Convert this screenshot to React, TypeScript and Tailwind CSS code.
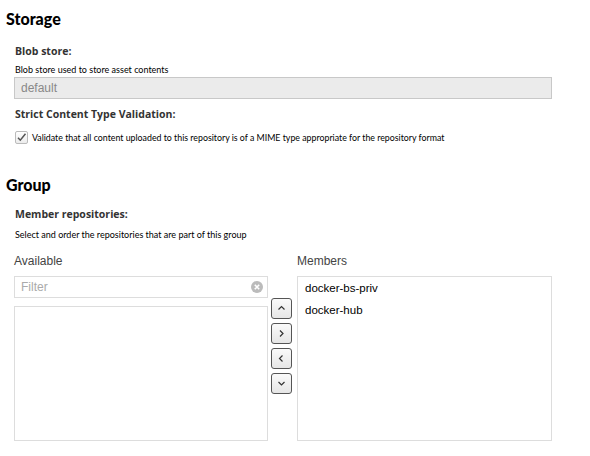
import React from 'react';

const Chevron: React.FC<{ dir: 'up' | 'down' | 'left' | 'right' }> = ({ dir }) => {
  const d = {
    up: 'M1.5 5.5 L4.5 2.5 L7.5 5.5',
    down: 'M1.5 3 L4.5 6 L7.5 3',
    left: 'M5.5 1.5 L2.5 4.5 L5.5 7.5',
    right: 'M3 1.5 L6 4.5 L3 7.5',
  }[dir];
  return (
    <svg width="9" height="9" viewBox="0 0 9 9" fill="none">
      <path d={d} stroke="#333" strokeWidth="1.2" />
    </svg>
  );
};

const MoveButton: React.FC<{ dir: 'up' | 'down' | 'left' | 'right' }> = ({ dir }) => (
  <button className="flex items-center justify-center w-[21px] h-[21px] rounded-[3px] border border-[#555] bg-gradient-to-b from-[#fafafa] to-[#e6e6e6]">
    <Chevron dir={dir} />
  </button>
);

export default function App() {
  return (
    <div className="w-[590px] h-[456px] bg-white text-black font-['Open_Sans',sans-serif] overflow-hidden">
      <h2 className="pl-[6px] pt-[9px] text-[16px] leading-[20px] font-black font-['Lato',sans-serif]">Storage</h2>

      <section className="pl-[15px]">
        <div className="mt-[15px] text-[10.5px] leading-[14px] font-bold text-[#333]">Blob store:</div>
        <div className="mt-[6px] text-[9px] leading-[12px] font-['Lato',sans-serif]">Blob store used to store asset contents</div>
        <div className="mt-px ml-[-1px] w-[538px] h-[22px] flex items-center px-[6px] bg-[#ebebeb] border border-[#c8c8c8] font-['Liberation_Sans',sans-serif] text-[12px] text-[#888]">
          default
        </div>

        <div className="mt-[8px] text-[10.5px] leading-[14px] font-bold text-[#333]">Strict Content Type Validation:</div>
        <label className="mt-[10px] flex items-center gap-[4px] h-[13px]">
          <span className="w-[13px] h-[13px] rounded-[2px] border border-[#bbb] bg-gradient-to-b from-white to-[#ececec] flex items-center justify-center">
            <svg width="11" height="11" viewBox="0 0 11 11" fill="none">
              <path d="M2 5.8 L4.3 8.2 L9.5 1.8" stroke="#555" strokeWidth="1.5" />
            </svg>
          </span>
          <span className="text-[8.8px] leading-[12px] font-['Lato',sans-serif]">
            Validate that all content uploaded to this repository is of a MIME type appropriate for the repository format
          </span>
        </label>
      </section>

      <h2 className="pl-[6px] mt-[31px] text-[16px] leading-[20px] font-black font-['Lato',sans-serif]">Group</h2>

      <section className="pl-[15px]">
        <div className="mt-[12px] text-[10.5px] leading-[14px] font-bold text-[#333]">Member repositories:</div>
        <div className="mt-[8px] text-[9px] leading-[12px] font-['Lato',sans-serif]">Select and order the repositories that are part of this group</div>

        <div className="mt-[12px] ml-[-1px] flex font-['Liberation_Sans',sans-serif] text-[12px]">
          <div className="w-[254px] flex flex-col">
            <div className="h-[16px] leading-[16px] text-[#444]">Available</div>
            <div className="mt-[7px] h-[22px] border border-[#ddd] flex items-center justify-between pl-[6px] pr-[4px]">
              <span className="text-[#aaa]">Filter</span>
              <svg width="12" height="12" viewBox="0 0 12 12">
                <circle cx="6" cy="6" r="6" fill="#bbb" />
                <path d="M3.8 3.8 L8.2 8.2 M8.2 3.8 L3.8 8.2" stroke="#fff" strokeWidth="1.6" />
              </svg>
            </div>
            <div className="mt-[8px] h-[135px] border border-[#ddd]" />
          </div>

          <div className="ml-[3px] pt-[45px] flex flex-col gap-[4px]">
            <MoveButton dir="up" />
            <MoveButton dir="right" />
            <MoveButton dir="left" />
            <MoveButton dir="down" />
          </div>

          <div className="ml-[5px] w-[255px] flex flex-col">
            <div className="h-[16px] leading-[16px] text-[#444]">Members</div>
            <div className="mt-[7px] h-[165px] border border-[#ddd] px-[7px] text-[11.5px] text-black">
              <div className="leading-[22px]">docker-bs-priv</div>
              <div className="leading-[22px]">docker-hub</div>
            </div>
          </div>
        </div>
      </section>
    </div>
  );
}
